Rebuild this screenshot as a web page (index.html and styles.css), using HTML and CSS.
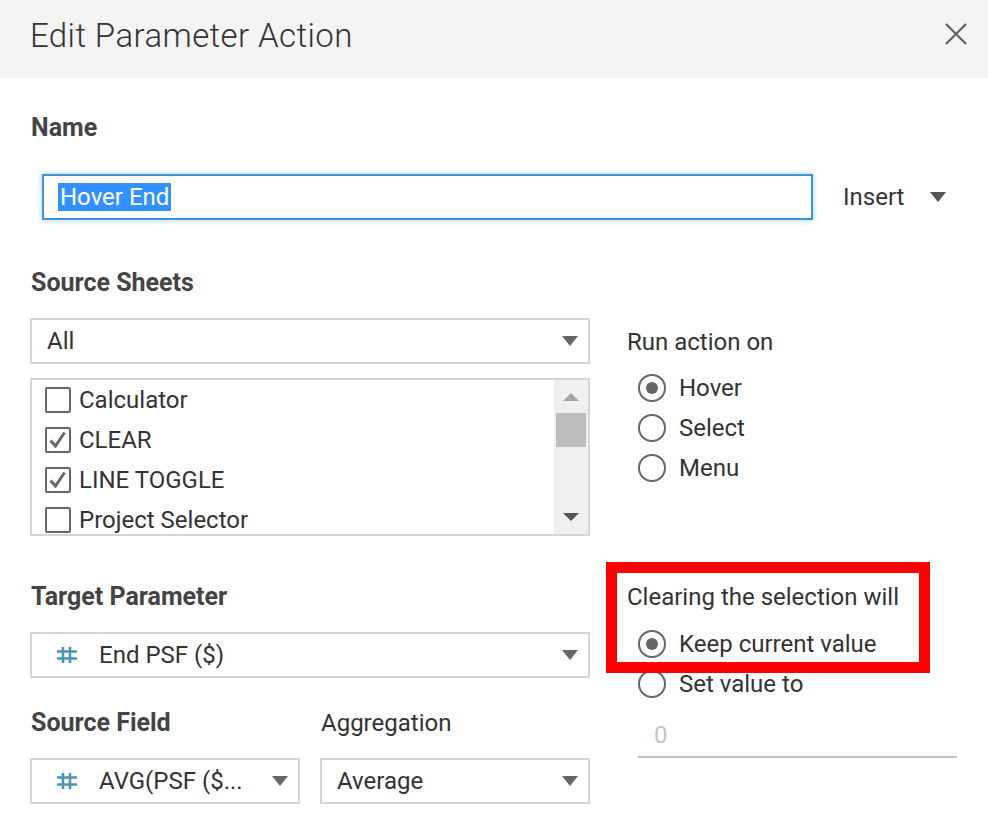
FILE: index.html
```html
<!DOCTYPE html>
<html>
<head>
<meta charset="utf-8">
<link rel="stylesheet" href="styles.css">
</head>
<body>
<div class="dialog">
  <header class="header">
    <h1 class="title">Edit Parameter Action</h1>
    <svg class="close" width="24" height="24" viewBox="0 0 24 24"><path d="M2 2 L22 22 M22 2 L2 22" stroke="#666" stroke-width="2.4" fill="none"/></svg>
  </header>
  <main class="content">
    <div class="label name-label">Name</div>
    <div class="name-row">
      <div class="name-input"><span class="sel">Hover End</span></div>
      <div class="insert">Insert <span class="tri tri-dark"></span></div>
    </div>
    <div class="label sheets-label">Source Sheets</div>
    <div class="grid">
      <div class="col-left">
        <div class="select"><span class="sel-text">All</span><span class="tri"></span></div>
        <div class="list">
          <div class="items">
            <div class="item"><span class="cb"></span>Calculator</div>
            <div class="item"><span class="cb"><svg width="22" height="22" viewBox="0 0 22 22"><path d="M3.5 11.5 L8.5 17 L17.5 3.5" stroke="#666" stroke-width="3" fill="none"/></svg></span>CLEAR</div>
            <div class="item"><span class="cb"><svg width="22" height="22" viewBox="0 0 22 22"><path d="M3.5 11.5 L8.5 17 L17.5 3.5" stroke="#666" stroke-width="3" fill="none"/></svg></span>LINE TOGGLE</div>
            <div class="item"><span class="cb"></span>Project Selector</div>
          </div>
          <div class="scrollbar">
            <span class="sb-up"></span>
            <span class="sb-thumb"></span>
            <span class="sb-down"></span>
          </div>
        </div>
        <div class="label target-label">Target Parameter</div>
        <div class="select"><span class="hash"><svg width="20" height="16" viewBox="0 0 20 16"><path d="M6 0 V16 M13 0 V16 M0 4.5 H20 M0 11.5 H20" stroke="#4a96b0" stroke-width="2.6" fill="none"/></svg></span><span class="sel-text field-text">End PSF ($)</span><span class="tri"></span></div>
        <div class="pair-row labels-row">
          <div class="label">Source Field</div>
          <div class="plain-label">Aggregation</div>
        </div>
        <div class="pair-row selects-row">
          <div class="select"><span class="hash"><svg width="20" height="16" viewBox="0 0 20 16"><path d="M6 0 V16 M13 0 V16 M0 4.5 H20 M0 11.5 H20" stroke="#4a96b0" stroke-width="2.6" fill="none"/></svg></span><span class="sel-text field-text">AVG(PSF ($...</span><span class="tri"></span></div>
          <div class="select"><span class="sel-text">Average</span><span class="tri"></span></div>
        </div>
      </div>
      <div class="col-right">
        <div class="plain-label run-label">Run action on</div>
        <div class="radios run-radios">
          <div class="radio-row"><span class="radio on"></span>Hover</div>
          <div class="radio-row"><span class="radio"></span>Select</div>
          <div class="radio-row"><span class="radio"></span>Menu</div>
        </div>
        <div class="clear-group">
          <div class="plain-label">Clearing the selection will</div>
          <div class="radios clear-radios">
            <div class="radio-row"><span class="radio on"></span>Keep current value</div>
            <div class="radio-row"><span class="radio"></span>Set value to</div>
          </div>
          <div class="value-input">0</div>
          <div class="highlight-box"></div>
        </div>
      </div>
    </div>
  </main>
</div>
</body>
</html>
```

FILE: styles.css
```css
* { box-sizing: border-box; }
html, body { margin: 0; padding: 0; background: #fff; }
body {
  width: 988px;
  height: 830px;
  overflow: hidden;
  font-family: Roboto, "Liberation Sans", sans-serif;
  color: #333;
}
.header {
  height: 78px;
  background: #f4f4f4;
  display: flex;
  align-items: center;
  justify-content: space-between;
  padding: 0 20px 0 30px;
}
.title {
  margin: 0;
  font-size: 33px;
  font-weight: 300;
  color: #333;
  letter-spacing: 0.4px;
  position: relative;
  top: -4px;
}
.close { position: relative; top: -5px; }
.content { padding: 0 30px; }
.label {
  font-size: 25px;
  font-weight: 700;
  color: #444;
  line-height: 30px;
  padding-left: 1px;
}
.plain-label {
  font-size: 24px;
  font-weight: 400;
  color: #333;
  line-height: 30px;
}
.name-label { margin-top: 35px; }
.name-row {
  display: flex;
  align-items: center;
  margin-top: 31px;
  padding-left: 12px;
}
.name-input {
  width: 771px;
  height: 46px;
  border: 2px solid #3a95d6;
  box-shadow: 0 0 6px rgba(58, 149, 214, 0.45);
  display: flex;
  align-items: center;
  padding-left: 14px;
  font-size: 24px;
}
.sel {
  background: #3390ff;
  color: #fff;
  line-height: 28px;
  padding: 0 2px;
}
.insert {
  margin-left: 30px;
  font-size: 24px;
  color: #333;
  display: flex;
  align-items: center;
}
.insert .tri { margin-left: 26px; }
.sheets-label { margin-top: 48px; }
.grid {
  display: grid;
  grid-template-columns: 560px 1fr;
  column-gap: 37px;
  margin-top: 20px;
}
.col-left, .col-right { display: flex; flex-direction: column; }
.select {
  height: 46px;
  border: 2px solid #d6d6d6;
  display: flex;
  align-items: center;
  padding: 0 10px 0 15px;
  font-size: 24px;
  color: #333;
}
.sel-text { flex: 1; white-space: nowrap; overflow: hidden; }
.tri {
  width: 0;
  height: 0;
  border-left: 8px solid transparent;
  border-right: 8px solid transparent;
  border-top: 10px solid #666;
}
.tri-dark { border-top-color: #555; }
.hash { width: 20px; height: 16px; margin-left: 10px; margin-right: 22px; display: flex; }
.list {
  margin-top: 14px;
  height: 158px;
  border: 2px solid #d6d6d6;
  display: flex;
}
.items { flex: 1; }
.item {
  height: 40px;
  display: flex;
  align-items: center;
  font-size: 24px;
  color: #333;
  padding-left: 13px;
}
.cb {
  width: 26px;
  height: 26px;
  border: 2px solid #666;
  border-radius: 2px;
  margin-right: 8px;
  display: flex;
  align-items: center;
  justify-content: center;
}
.scrollbar {
  width: 34px;
  background: #f0f0f0;
  display: flex;
  flex-direction: column;
  align-items: center;
  padding-top: 13px;
}
.sb-up {
  width: 0; height: 0;
  border-left: 8px solid transparent;
  border-right: 8px solid transparent;
  border-bottom: 8px solid #a6a6a6;
}
.sb-thumb {
  width: 30px;
  height: 34px;
  background: #bdbdbd;
  margin-top: 12px;
}
.sb-down {
  width: 0; height: 0;
  border-left: 8px solid transparent;
  border-right: 8px solid transparent;
  border-top: 8px solid #555;
  margin-top: 66px;
}
.target-label { margin-top: 46px; }
.target-label + .select { margin-top: 20px; }
.pair-row {
  display: grid;
  grid-template-columns: 270px 270px;
  column-gap: 20px;
}
.labels-row { margin-top: 30px; }
.labels-row .plain-label { padding-left: 1px; }
.selects-row { margin-top: 20px; }
.run-label { margin-top: 9px; }
.radios { display: flex; flex-direction: column; padding-left: 11px; }
.run-radios { margin-top: 11px; }
.radio-row {
  height: 40px;
  display: flex;
  align-items: center;
  font-size: 24px;
  color: #333;
}
.radio {
  width: 28px;
  height: 28px;
  border: 2px solid #666;
  border-radius: 50%;
  margin-right: 13px;
  display: flex;
  align-items: center;
  justify-content: center;
}
.radio.on::after {
  content: "";
  width: 12px;
  height: 12px;
  border-radius: 50%;
  background: #666;
}
.clear-group { position: relative; margin-top: 94px; }
.clear-radios { margin-top: 12px; }
.value-input {
  margin-top: 10px;
  margin-left: 11px;
  width: 319px;
  height: 44px;
  border-bottom: 2px solid #c2c2c2;
  font-size: 24px;
  color: #c4c4c4;
  padding-left: 16px;
  line-height: 42px;
}
.highlight-box {
  position: absolute;
  left: -21px;
  top: -20px;
  width: 324px;
  height: 111px;
  border: 11px solid #ff0000;
}
```
